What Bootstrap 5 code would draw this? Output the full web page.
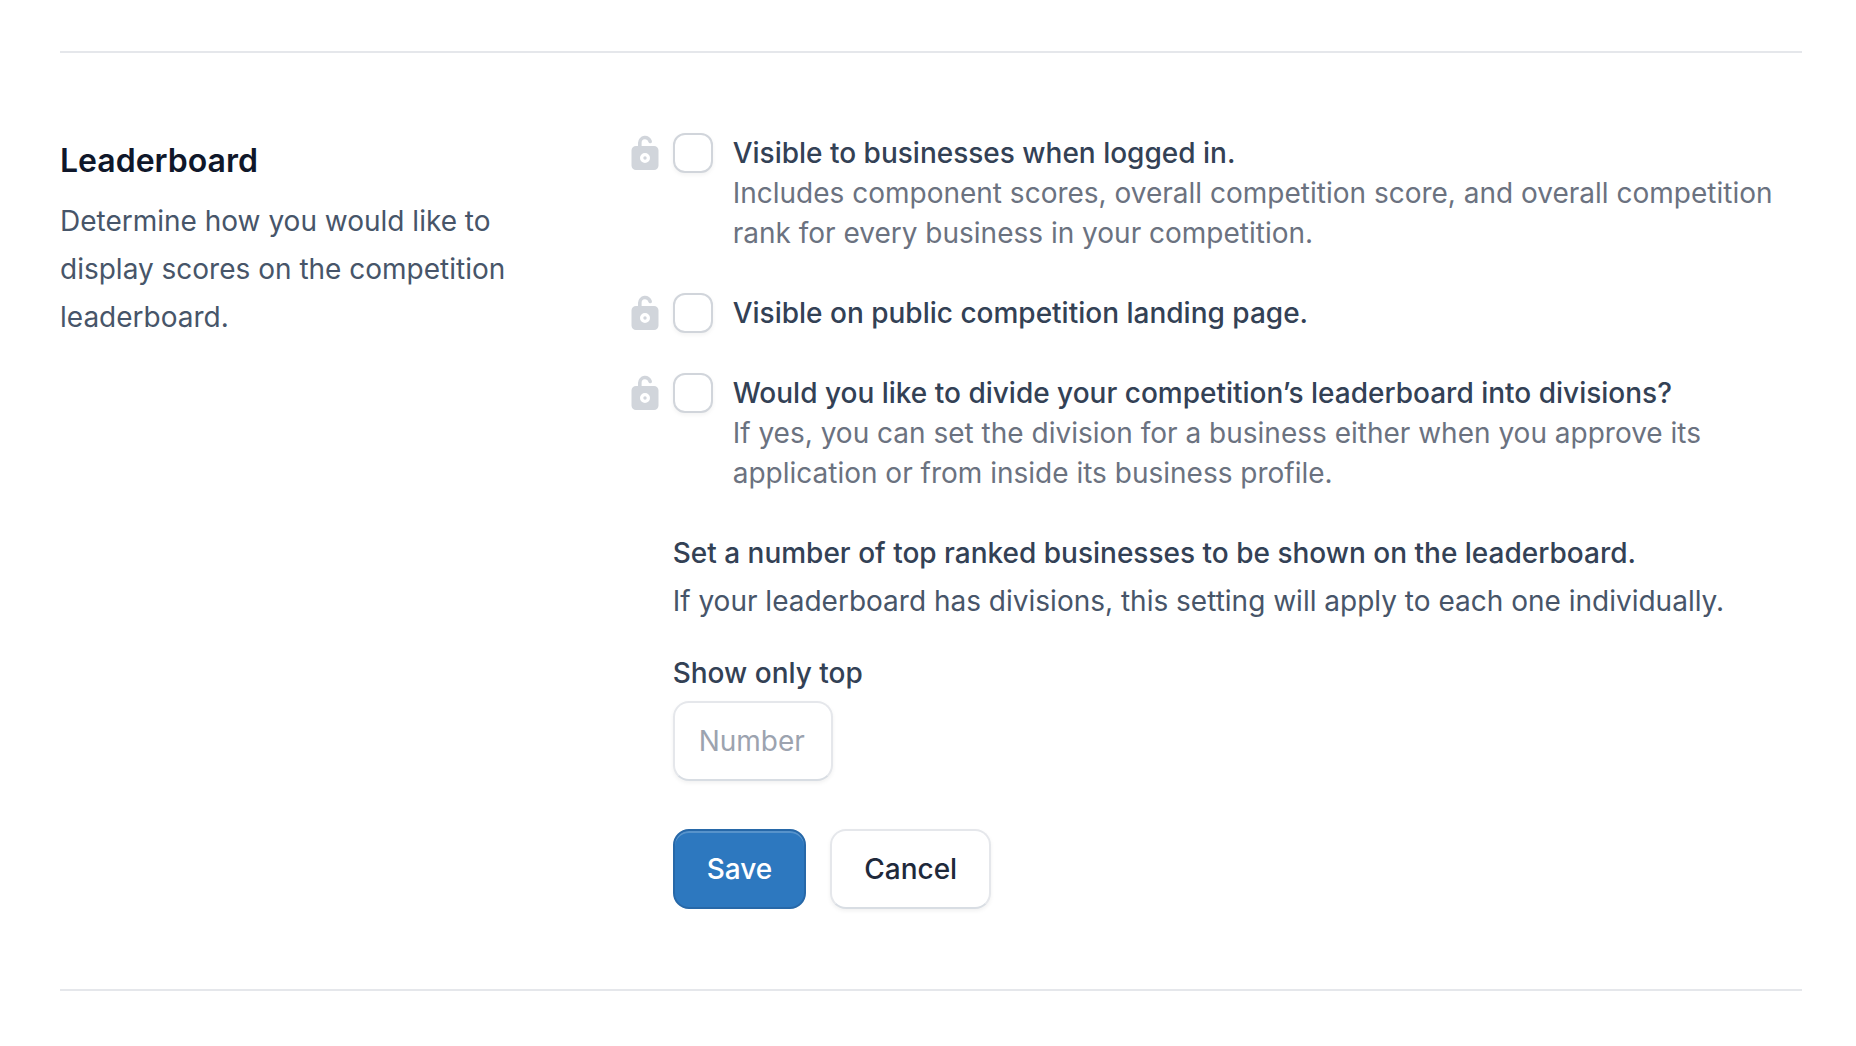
<!DOCTYPE html>
<html lang="en">
<head>
<meta charset="utf-8">
<meta name="viewport" content="width=device-width, initial-scale=1">
<title>Leaderboard settings</title>
<link rel="stylesheet" href="https://cdn.jsdelivr.net/npm/bootstrap@5.3.0/dist/css/bootstrap.min.css">
<style>
  body { font-family: Inter, "Liberation Sans", sans-serif; font-size: 28px; line-height: 40px; color: #334155; background: #fff; }
  .settings-page { padding: 51px 54px 0 60px; }
  .settings-section { --bs-gutter-x: 96px; padding: 80px 0; }
  .rule { border-top: 2px solid #e5e7eb; }
  .section-title { font-size: 32px; line-height: 56px; font-weight: 600; color: #0f172a; }
  .section-text { line-height: 48px; color: #475569; }
  .field-title { font-size: 28px; line-height: 40px; font-weight: 500; color: #334155; }
  .quiet { color: #6b7280; }
  .option-list { gap: 40px; margin-bottom: 40px; }
  .option-row { margin-left: -42px; }
  .lock-icon { width: 28px; height: 40px; margin-right: 14px; color: #d1d5db; }
  .option-row .form-check-input { width: 40px; height: 40px; margin: 0 20px 0 0; border: 2px solid #d1d5db; border-radius: 12px; box-shadow: 0 2px 4px rgba(0, 0, 0, .05); }
  .option-row .form-check-input:checked { background-color: #2d78bf; border-color: #2d78bf; }
  .soft-box { border: 2px solid #e5e7eb; border-bottom-color: #d8dde3; border-radius: 16px; box-shadow: 0 2px 4px rgba(0, 0, 0, .06); height: 80px; font-size: 28px; line-height: 40px; }
  .top-count { margin-top: 28px; }
  .number-box { width: 160px; padding: 0 24px; color: #334155; }
  .number-box::placeholder { color: #9ca3af; }
  .actions { margin-top: 48px; gap: 24px; }
  .action-btn { padding: 0 32px; font-weight: 500; }
  .save-btn { --bs-btn-color: #fff; --bs-btn-bg: #2d78bf; --bs-btn-hover-color: #fff; --bs-btn-hover-bg: #2769a8; border-color: #2768a8; box-shadow: inset 0 2px 0 rgba(255, 255, 255, .2); }
  .cancel-btn { --bs-btn-color: #1e293b; --bs-btn-bg: #fff; --bs-btn-hover-bg: #f8fafc; }
</style>
<script defer src="https://cdn.jsdelivr.net/npm/bootstrap@5.3.0/dist/js/bootstrap.bundle.min.js"></script>
</head>
<body>
<svg class="d-none" aria-hidden="true">
  <symbol id="lock-open" viewBox="0 0 28 40">
    <path d="M8.800 15V9.800a5.300 5.300 0 0 1 10.400-1.400" fill="none" stroke="currentColor" stroke-width="3.600" stroke-linecap="round"/>
    <path fill="currentColor" fill-rule="evenodd" d="M5 13h18a4.500 4.500 0 0 1 4.500 4.500v15a4.500 4.500 0 0 1-4.500 4.500H5a4.500 4.500 0 0 1-4.500-4.500v-15A4.500 4.500 0 0 1 5 13zM14 20a5 5 0 1 0 0 10a5 5 0 0 0 0-10z"/>
    <circle cx="14" cy="25" r="1.700" fill="currentColor"/>
  </symbol>
</svg>
<main class="settings-page">
  <div class="rule"></div>
  <section class="row settings-section">
    <div class="col-12 col-lg-4">
      <h2 class="section-title mb-2">Leaderboard</h2>
      <p class="section-text mb-0">Determine how you would like to display scores on the competition leaderboard.</p>
    </div>
    <form class="col-12 col-lg-8">
      <div class="option-list d-flex flex-column">
        <div class="option-row d-flex align-items-start">
          <svg class="lock-icon flex-shrink-0" aria-hidden="true"><use href="#lock-open"/></svg>
          <input class="form-check-input flex-shrink-0" type="checkbox" id="visible-members" aria-describedby="members-note">
          <div>
            <label class="field-title d-block" for="visible-members">Visible to businesses when logged in.</label>
            <p class="quiet mb-0" id="members-note">Includes component scores, overall competition score, and overall competition rank for every business in your competition.</p>
          </div>
        </div>
        <div class="option-row d-flex align-items-start">
          <svg class="lock-icon flex-shrink-0" aria-hidden="true"><use href="#lock-open"/></svg>
          <input class="form-check-input flex-shrink-0" type="checkbox" id="visible-public">
          <label class="field-title" for="visible-public">Visible on public competition landing page.</label>
        </div>
        <div class="option-row d-flex align-items-start">
          <svg class="lock-icon flex-shrink-0" aria-hidden="true"><use href="#lock-open"/></svg>
          <input class="form-check-input flex-shrink-0" type="checkbox" id="use-divisions" aria-describedby="divisions-note">
          <div>
            <label class="field-title d-block" for="use-divisions">Would you like to divide your competition’s leaderboard into divisions?</label>
            <p class="quiet mb-0" id="divisions-note">If yes, you can set the division for a business either when you approve its application or from inside its business profile.</p>
          </div>
        </div>
      </div>
      <h3 class="field-title mb-1">Set a number of top ranked businesses to be shown on the leaderboard.</h3>
      <p class="section-text mb-0">If your leaderboard has divisions, this setting will apply to each one individually.</p>
      <div class="top-count">
        <label class="field-title d-block mb-2" for="show-top">Show only top</label>
        <input class="form-control soft-box number-box" type="text" inputmode="numeric" id="show-top" placeholder="Number">
      </div>
      <div class="actions d-flex">
        <button type="submit" class="btn soft-box action-btn save-btn">Save</button>
        <button type="button" class="btn soft-box action-btn cancel-btn">Cancel</button>
      </div>
    </form>
  </section>
  <div class="rule"></div>
</main>
</body>
</html>
